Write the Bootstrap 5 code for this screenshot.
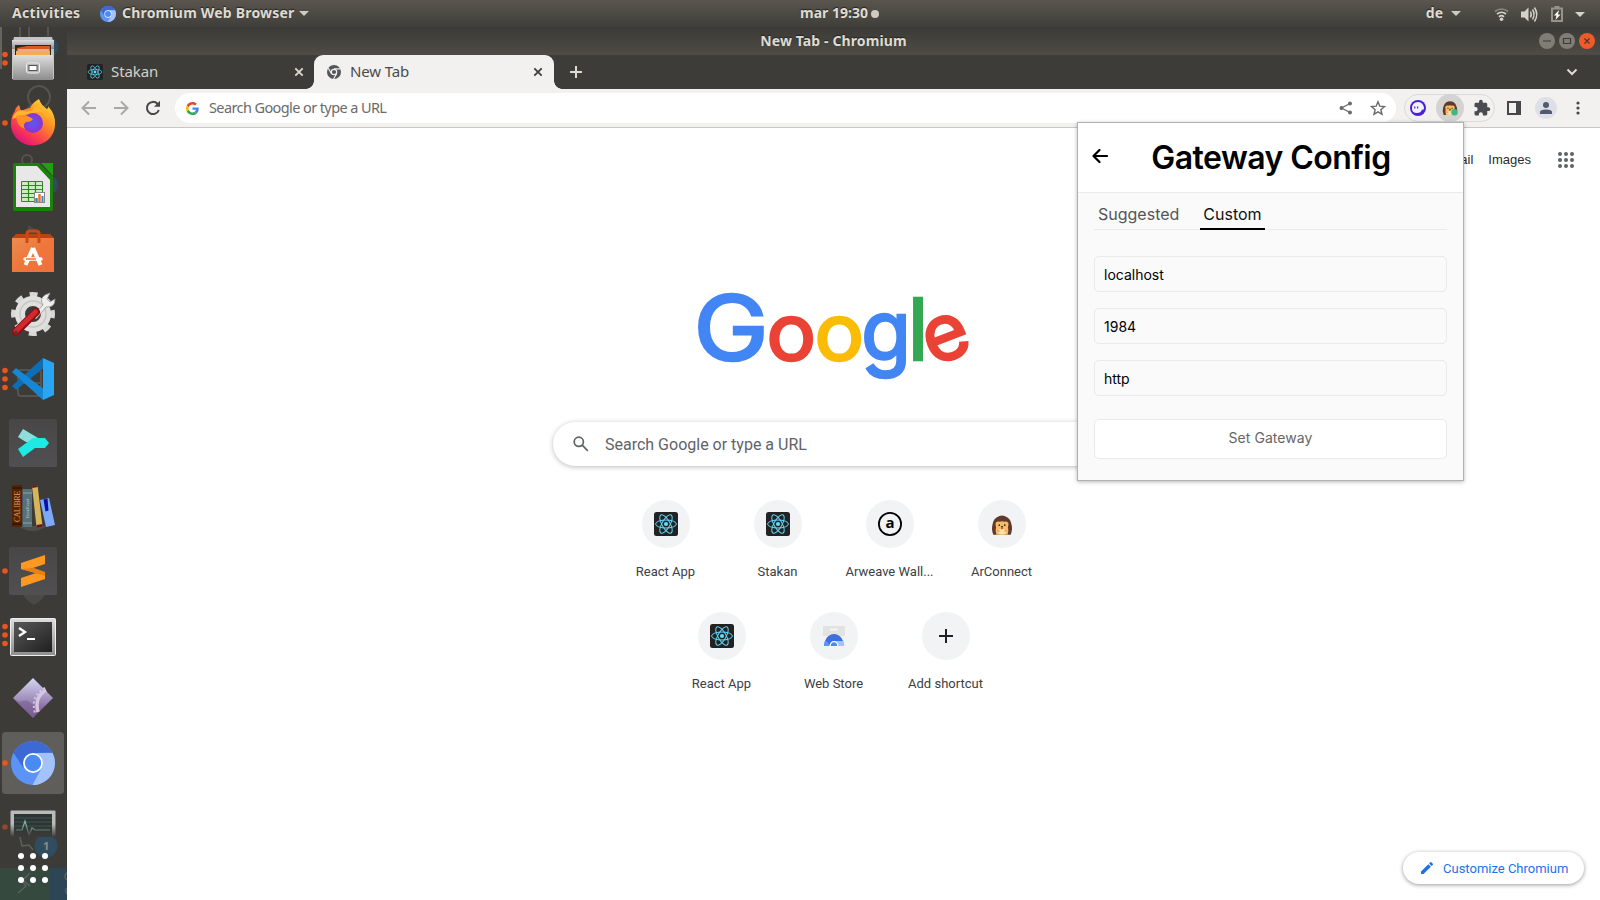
<!DOCTYPE html>
<html lang="en">
<head>
<meta charset="utf-8">
<meta name="viewport" content="width=device-width, initial-scale=1">
<title>New Tab - Chromium</title>
<link href="https://cdn.jsdelivr.net/npm/bootstrap@5.3.0/dist/css/bootstrap.min.css" rel="stylesheet">
<style>
html,body{height:100%;overflow:hidden}
body{font-family:Roboto,"Liberation Sans",sans-serif;background:#fff}
svg{display:block;flex:none}
.desk{width:1600px;height:900px}
.ui{font-family:"Noto Sans","Open Sans",sans-serif}
.topbar{height:27px;background:linear-gradient(#5a564e,#3f3e39);color:#dfdbd2;font-size:14px;font-weight:700;line-height:27px;text-shadow:0 -1px 1px #222}
.topbar>span:not(.caret){padding-bottom:2px;line-height:24px}
.topbar .caret{width:0;height:0;border:5px solid transparent;border-top-color:#cfcbc2;border-bottom:0}
.dock{width:67px;background:#3c3b37;overflow:hidden;flex:none}
.dock-ghost,.dock-foot{position:absolute;left:0;bottom:0}
.titlebar{height:28px;background:linear-gradient(#3b3a36,#4e4c45);color:#dfdbd2;font-size:14px;font-weight:700;line-height:27px;text-shadow:0 -1px 1px #222}
.wtitle{line-height:26px;padding-bottom:1px;letter-spacing:.12px}
.tabstrip{height:34px;background:#3e3c38;font-size:15px;color:#d5d1c8}
.tab-item{height:34px;width:247px;padding:0 9px 0 20px}
.tab-item span{padding-bottom:2px}
.tab-on{background:#f2f1f0;color:#4a4a4a;width:240px;padding:0 10px 0 13px;border-radius:9px 9px 0 0;position:relative}
.tab-on::before,.tab-on::after{content:"";position:absolute;bottom:0;width:8px;height:8px}
.tab-on::before{left:-8px;background:radial-gradient(circle at 0 0,transparent 7.5px,#f2f1f0 8px)}
.tab-on::after{right:-8px;background:radial-gradient(circle at 100% 0,transparent 7.5px,#f2f1f0 8px)}
.toolbar{height:39px;background:#f2f1f0;border-bottom:1px solid #c9c7c5;padding:0 6px}
.slot{width:32px;flex:none;display:flex;align-items:center;justify-content:center}
.omni{height:30px;width:1221px;background:#fff;border-radius:15px;margin-left:6px;padding-left:11px;padding-right:2px;color:#6b6b6b}
.omni-text{font-size:14.5px;letter-spacing:-.6px;padding-bottom:1px}
.ext-pill{width:91px;height:28px;border:1px solid #dcdad8;border-radius:14px;margin-left:8px}
.ext-on{width:28px;height:28px;border-radius:50%;background:#d5d3d1}
.avatar{width:22px;height:22px;border-radius:50%;background:#dde0e6}
.toplinks{font:13px "Liberation Sans",sans-serif;color:#2c2c2c;padding:22px 24px 0 0;height:134px}
.wordmark{overflow:visible}
.ntp-search{width:561px;height:44px;border-radius:22px;box-shadow:0 1px 5px rgba(32,33,36,.3);font-size:16px;color:#5f6368;padding-left:20px;margin-top:36px}
.tiles{width:448px;margin-top:24px}
.tile{width:112px;height:112px;padding-top:10px;font-size:13px;color:#3c4043;line-height:18px}
.tile-icon{width:48px;height:48px;border-radius:50%;background:#f1f3f4;margin-bottom:15px}
.customize{position:absolute;right:16px;bottom:16px;width:181px;height:32px;border-radius:16px;background:#fff;box-shadow:0 1px 4px rgba(0,0,0,.4);color:#1a73e8;font-size:13px;padding-left:18px}
.popup{position:absolute;left:1077px;top:122px;width:387px;height:359px;background:#fafafa;border:1px solid #aeb2b0;box-shadow:0 1px 4px rgba(0,0,0,.28);font-family:Inter,sans-serif;color:#111}
.popup-head{height:70px;background:#fff;border-bottom:1px solid #eaeaea;padding-left:13px}
.popup-title{font-size:32px;font-weight:600;letter-spacing:-.55px;color:#000;line-height:68px;width:353px;padding-right:27px}
.popup-tabs{margin:0 16px;height:37px;border-bottom:1px solid #eaeaea;font-size:16px}
.popup-tabs .ptab{height:37px;line-height:43px;padding:0 3px 0 4px;color:#555}
.popup-tabs .ptab-on{color:#111;border-bottom:2px solid #000;margin-left:18px;padding-left:3px}
.field{height:36px;border:1px solid #eaeaea;border-radius:5px;background:#fafafa;font-size:14px;color:#000;padding:0 9px;line-height:34px;box-shadow:none;margin-bottom:16px}
.set-btn{height:40px;border:1px solid #eaeaea;border-radius:5px;background:#fff;color:#666;font-size:14px;margin-top:7px;letter-spacing:.07px}
</style>
</head>
<body>
<svg width="0" height="0" class="position-absolute">
 <defs>
  <symbol id="react" viewBox="0 0 24 24">
   <rect width="24" height="24" rx="2.500" fill="#222"/>
   <g fill="none" stroke="#61dafb" stroke-width="1"><ellipse cx="12" cy="12" rx="10.400" ry="4"/><ellipse cx="12" cy="12" rx="10.400" ry="4" transform="rotate(60 12 12)"/><ellipse cx="12" cy="12" rx="10.400" ry="4" transform="rotate(120 12 12)"/></g><circle cx="12" cy="12" r="2.100" fill="#61dafb"/>
  </symbol>
  <symbol id="chromium" viewBox="0 0 44 44">
   <circle cx="22" cy="22" r="22" fill="#5b94f6"/>
   <path d="M2.500 11.800A22 22 0 0 1 41.200 11.500L22 12L12.500 27Z" fill="#3c69d3"/>
   <path d="M41.500 12A22 22 0 0 1 21.500 44L31.500 25.500Q33 17 25 12Z" fill="#a3c2fa"/>
   <circle cx="22" cy="22" r="10" fill="#fff"/><circle cx="22" cy="22" r="8.200" fill="#4a8af4"/>
  </symbol>
  <symbol id="hedgehog" viewBox="0 0 24 24">
   <path d="M2.500 22.500Q0 16 1.800 11Q2.500 6 6.500 3.500Q12 0 17.500 3.500Q21.500 6 22.200 11Q24 16 21.500 22.500Z" fill="#613a2b"/>
   <path d="M6 22.500Q4.500 18 5.500 14Q4 9.500 6.500 8.500Q8.500 8 9.500 8.500Q12 7.500 14.500 8.500Q15.500 8 17.500 8.500Q20 9.500 18.500 14Q19.500 18 18 22.500Z" fill="#f5bd66"/>
   <ellipse cx="12" cy="19.300" rx="4.300" ry="3.200" fill="#fbe0a8"/><circle cx="9" cy="12.200" r=".9" fill="#2c1a16"/><circle cx="15" cy="12.200" r=".9" fill="#2c1a16"/><ellipse cx="12" cy="14" rx="1.200" ry=".9" fill="#2c1a16"/><path d="M11 16h2" stroke="#a7392d"/><path d="M7 18l2.500 1M17 18l-2.500 1" stroke="#d18b3e"/>
  </symbol>
  <linearGradient id="gMetal" x1="0" y1="0" x2="0" y2="1"><stop offset="0" stop-color="#dedede"/><stop offset="1" stop-color="#8d8d8d"/></linearGradient>
  <linearGradient id="gFox" x1="1" y1="0" x2="0.300" y2="1"><stop offset="0" stop-color="#fff14a"/><stop offset=".4" stop-color="#ff9a22"/><stop offset=".75" stop-color="#fb3f4d"/><stop offset="1" stop-color="#e0127c"/></linearGradient>
  <radialGradient id="gGlobe"><stop offset="0" stop-color="#5a5bea"/><stop offset="1" stop-color="#8c32d6"/></radialGradient>
  <linearGradient id="gBag" x1="0" y1="0" x2="1" y2="1"><stop offset="0" stop-color="#ec8d4e"/><stop offset=".5" stop-color="#ef763b"/><stop offset="1" stop-color="#f0703b"/></linearGradient>
  <linearGradient id="gSlate" x1="0" y1="0" x2="0" y2="1"><stop offset="0" stop-color="#474747"/><stop offset="1" stop-color="#505053"/></linearGradient>
  <linearGradient id="gDia" x1="0" y1="0" x2="0" y2="1"><stop offset="0" stop-color="#d2d8f2"/><stop offset=".6" stop-color="#9a84b4"/><stop offset="1" stop-color="#6d4277"/></linearGradient>
  <linearGradient id="gScr" x1="0" y1="0" x2="1" y2="1"><stop offset="0" stop-color="#595959"/><stop offset="1" stop-color="#1f1f1f"/></linearGradient>
  <linearGradient id="gFade" x1="0" y1="0" x2="0" y2="1"><stop offset="0" stop-color="#3c3b37" stop-opacity="0"/><stop offset=".4" stop-color="#3c3b37" stop-opacity="0"/><stop offset="1" stop-color="#3c3b37"/></linearGradient>
 </defs>
</svg>

<div class="desk d-flex flex-column position-relative">
 <!-- GNOME top bar -->
 <div class="topbar ui d-flex align-items-center">
  <span style="margin-left:12px;width:88px;letter-spacing:.35px">Activities</span>
  <svg width="16" height="16"><use href="#chromium"/></svg>
  <span style="margin-left:6px;width:177px;letter-spacing:.2px">Chromium Web Browser</span>
  <span class="caret"></span>
  <span style="margin-left:491px">mar 19:30</span>
  <svg width="8" height="8" style="margin-left:3px"><circle cx="4" cy="4" r="4" fill="#cfcbc2"/></svg>
  <span class="ms-auto me-2">de</span><span class="caret" style="margin-right:33px"></span>
  <svg width="96" height="26" viewBox="0 0 96 26" style="margin-right:10px" fill="none" stroke="#d6d2ca" stroke-width="1.700">
   <g><path d="M1 10.500Q7.500 5.500 14 10.500" stroke="#8b8880" /><path d="M3 13Q7.500 9.500 12 13M5 15.800Q7.500 13.500 10 15.800"/><circle cx="7.500" cy="18.300" r="1.800" fill="#d6d2ca" stroke="none"/></g>
   <path d="M27 10.500h3.500l4-4v14l-4-4H27Z" fill="#d6d2ca" stroke="none"/><path d="M36.500 10.500Q38 13.500 36.500 16.500M38.500 8.500Q41.500 13.500 38.500 18.500M40.500 6.500Q45 13.500 40.500 20.500" stroke-width="1.500"/>
   <path d="M58 7.500h10v12.500H58Z" stroke="#96938b" stroke-width="2"/><path d="M60.500 6h5" stroke="#96938b" stroke-width="2"/><path d="M64.500 9.500l-4.500 5h2.500l-1 4.500 5-5.500h-2.700l1.200-4Z" fill="#fff" stroke="none"/>
   <path d="M81 11h10l-5 5Z" fill="#d6d2ca" stroke="none"/>
  </svg>
 </div>

 <div class="d-flex flex-grow-1" style="min-height:0">
  <!-- Dock -->
  <div class="dock position-relative">
   <svg class="dock-ghost" width="67" height="873" viewBox="0 27 67 873" fill="none" stroke="#55544f" stroke-width="2"><path d="M0 27h2v42H0Z" fill="#65645f" stroke="none"/><path d="M20 27v12M29 27v12M48 27v12"/><circle cx="47" cy="47" r="11" fill="#2f4d5f" stroke="none"/><circle cx="39" cy="97" r="11"/><path d="M31 105l-8 9"/><circle cx="27" cy="160" r="5"/><circle cx="48" cy="185" r="10" fill="#2f4d5f" stroke="none"/><path d="M28 225v16l14-8Z" fill="#4a4945" stroke="none"/><rect x="18" y="370" width="23" height="26" rx="3"/><path d="M18 383h23"/><path d="M18 526q15 10 29 0Z" fill="#4e4d49" stroke="none"/><path d="M21 590h26q-2 9-13 15q-11-6-13-15Z" fill="#4a4945" stroke="none"/></svg>
   <div class="position-relative d-flex flex-column">
    <!-- Files -->
    <svg width="67" height="64"><g fill="#e95420"><circle cx="5" cy="27.500" r="2.800"/><circle cx="5" cy="36" r="2.800"/></g><path d="M14 10h38l2 8v34H12V18Z" fill="#c4c4c4"/><path d="M12 13h42v9H12Z" fill="url(#gMetal)"/><path d="M15 18h36v10H15Z" fill="#33251e"/><path d="M17 21l10-2h23v9H16Z" fill="#d65a20"/><path d="M16 24h34v4H16Z" fill="#f7ab59"/><path d="M18 23h31" stroke="#fff"/><path d="M13 28h40v25H13Z" fill="url(#gMetal)"/><rect x="26.500" y="36" width="13" height="10" rx="2" fill="#b5b5b5" stroke="#eee"/><rect x="29" y="38.500" width="8" height="5" fill="#fff" stroke="#555"/></svg>
    <!-- Firefox -->
    <svg width="67" height="64"><circle cx="5" cy="32" r="2.800" fill="#e95420"/><path d="M11 33Q11 24 15 20Q15 17 19 14L21 20Q25 18 30 17Q33 11 39 8Q41 14 47 18Q49 17 48 15Q56 24 55 34A22 21 0 0 1 11 33Z" fill="url(#gFox)"/><path d="M12 28Q16 17 25 20Q31 22 35 16Q46 18 48 31Q46 19 37 21L24 24Z" fill="#ffb52e"/><circle cx="33" cy="32" r="10" fill="url(#gGlobe)"/><path d="M16 25Q24 22 33 28Q31 31 26 31Q22 34 25 38Q17 36 16 25Z" fill="#ff9127"/></svg>
    <!-- Calc -->
    <svg width="67" height="64"><path d="M15 8h24l14 14v32q0 2-2 2H15q-2 0-2-2V10q0-2 2-2Z" fill="#18820a"/><path d="M41 8h12v13Z" fill="#1fa00c"/><path d="M16 11h21l13 14v27H16Z" fill="#e8e8e8"/><path d="M21.500 26.500h21v20h-21Z" fill="#c9f0bf" stroke="#2a8a1b"/><path d="M21.500 30.500h21M21.500 34.500h21M21.500 38.500h21M21.500 42.500h21M28.500 26.500v20M35.500 26.500v20" stroke="#2a8a1b" stroke-width="1.200"/><rect x="34.500" y="37.500" width="10" height="10" fill="#fff" stroke="#888"/><path d="M36.500 47v-4" stroke="#2f8ad0" stroke-width="2.500"/><path d="M39.500 47v-8" stroke="#e87722" stroke-width="2.500"/><path d="M42.500 47v-6" stroke="#2f8ad0" stroke-width="2"/></svg>
    <!-- Software -->
    <svg width="67" height="64"><path d="M12 19l4-4h34l4 4Z" fill="#ba4316"/><path d="M12 19h42v34H12Z" fill="url(#gBag)"/><path d="M27 24v-9q0-3 3-3h6q3 0 3 3v9" fill="none" stroke="#c64b1c" stroke-width="3"/><path d="M33 29L25.500 46M33 29L40.500 46" stroke="#fff" stroke-width="4"/><path d="M25 40h16" stroke="#fff" stroke-width="3.500" stroke-linecap="round"/><path d="M26 40h10" stroke="#ef763b" stroke-width="1.500"/></svg>
    <!-- Settings -->
    <svg width="67" height="64"><circle cx="33" cy="31" r="19.500" fill="none" stroke="#d8d8d6" stroke-width="5" stroke-dasharray="7.650 7.650" transform="rotate(-11 33 31)"/><circle cx="33" cy="31" r="13" fill="none" stroke="#dfdfdd" stroke-width="10"/><circle cx="33" cy="31" r="13" fill="none" stroke="#c6c6c4" stroke-width="1.500"/><path d="M33 33l10-11q-4-6 2-10l5-2-3 6 3 3 5-3q0 9-9 8L36 36Z" fill="#eee" stroke="#999" stroke-width=".8"/><path d="M36 29L16 49" stroke="#8d1016" stroke-width="8" stroke-linecap="round"/><path d="M35.500 29L16 48" stroke="#d2292f" stroke-width="5" stroke-linecap="round"/><circle cx="16" cy="49" r="1.500" fill="#3c3b37"/></svg>
    <!-- VS Code -->
    <svg width="67" height="64"><g fill="#e95420"><circle cx="5" cy="23.500" r="2.800"/><circle cx="5" cy="32" r="2.800"/><circle cx="5" cy="40.500" r="2.800"/></g><path d="M43 11L12 39l4 4 29-23Z" fill="#0f6db5"/><path d="M12 25l4-4 29 22-2 10Z" fill="#1587d4"/><path d="M43 11l11 5v32l-11 5Z" fill="#2aa5f3"/></svg>
    <!-- Tabby -->
    <svg width="67" height="64"><rect x="9" y="8" width="48" height="48" rx="2" fill="url(#gSlate)"/><path d="M23 18l-5 8 8 5h10l2-4Z" fill="#8ddfdc"/><path d="M18 38l15-11h12l4 5-4 5H35L23 46Z" fill="#1ee9e5"/></svg>
    <!-- Calibre -->
    <svg width="67" height="64"><rect x="12" y="10" width="10" height="42" fill="#562205"/><path d="M12 13h10M12 49h10" stroke="#1d0c02"/><text transform="translate(20 47) rotate(-90)" font-family="Liberation Serif,serif" font-size="7.500" textLength="31" fill="#dfa94a">CALIBRE</text><rect x="22.500" y="14" width="9.500" height="38" fill="#587078"/><path d="M23 18h9M23 48h9" stroke="#8ba5ac"/><text transform="translate(29 43) rotate(-90)" font-family="Liberation Serif,serif" font-size="5" textLength="19" fill="#b5c6cb">Kovid Goyal</text><path d="M32 11l5.500-1 5 41-6 1Z" fill="#d7b65b"/><path d="M32 10.500l5.500-.5.400 2-5.600 1ZM36.500 50l6-1v2.500l-6 1Z" fill="#6a1422"/><path d="M40 25l9-2 6 27-9 2Z" fill="#7da9fb"/><path d="M43.500 24.500l4-1 1 12-3 1Z" fill="#0712a8"/></svg>
    <!-- Sublime Text -->
    <svg width="67" height="64"><circle cx="5" cy="32" r="2.800" fill="#e95420"/><rect x="9" y="8" width="48" height="48" rx="2" fill="url(#gSlate)"/><path d="M21 24l24-8v9L30 30l15 5v5L21 48v-9l15-5-15-4Z" fill="#ff9820"/><path d="M21 30l24 7v-4l-11-4Z" fill="#e9810e"/></svg>
    <!-- Terminal -->
    <svg width="67" height="64"><g fill="#e95420"><circle cx="5" cy="23.500" r="2.800"/><circle cx="5" cy="32" r="2.800"/><circle cx="5" cy="40.500" r="2.800"/></g><rect x="10.500" y="15.500" width="45" height="37" rx="1" fill="url(#gMetal)" stroke="#eee"/><rect x="14" y="19" width="38" height="30" fill="url(#gScr)"/><path d="M19 25l6 4-6 4" fill="none" stroke="#fff" stroke-width="2.300"/><path d="M27 36h8" stroke="#fff" stroke-width="2"/></svg>
    <!-- Diamond -->
    <svg width="67" height="64"><path d="M33 11l20 20-20 20-20-20Z" fill="url(#gDia)"/><path d="M14 32q5 4 9 2t9 3 3 12l-2 2Z" fill="#7d6698" opacity=".7"/><path d="M46 23Q34 30 38 45" fill="none" stroke="#d5c6e2" stroke-width="3.500"/><path d="M45 21Q30 29 35 46" fill="none" stroke="#d5c6e2" stroke-width="2" stroke-dasharray="2 2.500"/></svg>
    <!-- Chromium -->
    <svg width="67" height="64"><rect x="2" y="1" width="62" height="62" rx="3.500" fill="#5f5e5b"/><circle cx="5" cy="32" r="2.800" fill="#e95420"/><use href="#chromium" x="11" y="10" width="44" height="44"/></svg>
    <!-- System monitor -->
    <svg width="67" height="64"><circle cx="5" cy="32" r="2.800" fill="#8e4930"/><path d="M10.500 42V16.500q0-1 1-1h43q1 0 1 1V42" fill="#bababa"/><path d="M14 19h38v23H14Z" fill="#2b3634"/><path d="M14 23h38M14 27h38M14 31h38" stroke="#455250"/><path d="M16 35h6l3-9 4 14 3-7 3 2h15" fill="none" stroke="#7fb8a7" stroke-width="1.200"/><path d="M8 20h50v22H8Z" fill="url(#gFade)"/></svg>
   </div>
   <svg class="dock-foot" width="67" height="63" viewBox="0 837 67 63"><path d="M0 837h67v63H0Z" fill="#3c3b37"/><path d="M0 868h49v32H0Z" fill="#36493e"/><path d="M49 868h18v32H49Z" fill="#2d4555"/><path d="M20 837l2 9 7-1 4 5M18 893l8-7-6-7M30 873l-7 7 7 6M67 873a4 4 0 0 0 0 7M67 888a4 4 0 0 0 0 6" fill="none" stroke="#5b615a" stroke-width="1.500"/><circle cx="46" cy="846" r="11.500" fill="#2f4d5f"/><text x="43" y="850" font-family="Noto Sans,sans-serif" font-weight="700" font-size="11" fill="#8c8c88">1</text><g fill="#fff"><circle cx="21" cy="856" r="3"/><circle cx="33" cy="856" r="3"/><circle cx="45" cy="856" r="3"/><circle cx="21" cy="868" r="3"/><circle cx="33" cy="868" r="3"/><circle cx="45" cy="868" r="3"/><circle cx="21" cy="880" r="3"/><circle cx="33" cy="880" r="3"/><circle cx="45" cy="880" r="3"/></g></svg>
  </div>

  <!-- Browser window -->
  <div class="d-flex flex-column flex-grow-1 bg-white">
   <div class="titlebar ui d-flex align-items-center">
    <div style="width:61px"></div>
    <div class="flex-grow-1 text-center wtitle">New Tab - Chromium</div>
    <svg width="61" height="28" viewBox="0 0 61 28"><circle cx="8" cy="14" r="8" fill="#7f7d76"/><circle cx="28" cy="14" r="8" fill="#7f7d76"/><circle cx="48" cy="14" r="8" fill="#ef5a29"/><path d="M4 14h8M24.500 11.500h7v5h-7ZM45.500 11.500l5 5M50.500 11.500l-5 5" fill="none" stroke="#3c3b37" stroke-width="1.200"/></svg>
   </div>
   <div class="tabstrip ui d-flex align-items-center">
    <div class="tab-item d-flex align-items-center">
     <svg width="16" height="16"><use href="#react"/></svg><span style="margin-left:8px;letter-spacing:-.1px">Stakan</span>
     <svg class="ms-auto" width="12" height="12" viewBox="0 0 12 12" stroke="#dfdbd2" stroke-width="1.800"><path d="M2.300 2.300l7.400 7.400M9.700 2.300L2.300 9.700"/></svg>
    </div>
    <div class="tab-item tab-on d-flex align-items-center">
     <svg width="14" height="14" viewBox="0 0 14 14"><circle cx="7" cy="7" r="7" fill="#54565a"/><circle cx="7" cy="7" r="2.700" fill="none" stroke="#f2f1f0" stroke-width="1.200"/><path d="M7 3.900h6.500M4.300 8.500L1.200 3M9.700 8.600L6.500 14" stroke="#f2f1f0" stroke-width="1.100"/></svg><span style="margin-left:9px;letter-spacing:-.15px">New Tab</span>
     <svg class="ms-auto" width="12" height="12" viewBox="0 0 12 12" stroke="#3f3f3f" stroke-width="1.800"><path d="M2.300 2.300l7.400 7.400M9.700 2.300L2.300 9.700"/></svg>
    </div>
    <svg width="12" height="12" style="margin-left:16px" stroke="#dfdbd2" stroke-width="2"><path d="M6 0v12M0 6h12"/></svg>
    <svg class="ms-auto" width="12" height="8" style="margin-right:22px" fill="none" stroke="#dfdbd2" stroke-width="2"><path d="M1.500 1.500L6 6l4.500-4.500"/></svg>
   </div>
   <div class="toolbar ui d-flex align-items-center">
    <div class="slot"><svg width="16" height="16" fill="none" stroke="#a9a8a6" stroke-width="2"><path d="M15 8H2M8 1.500L1.500 8 8 14.500"/></svg></div>
    <div class="slot"><svg width="16" height="16" fill="none" stroke="#a9a8a6" stroke-width="2"><path d="M1 8h13M8 1.500L14.500 8 8 14.500"/></svg></div>
    <div class="slot"><svg width="16" height="16" fill="none" stroke="#45474a" stroke-width="2"><path d="M13.800 10A6.100 6.100 0 1 1 12.500 3.800L14 5.500"/><path d="M15 .8v6H9Z" fill="#45474a" stroke="none"/></svg></div>
    <div class="omni d-flex align-items-center">
     <svg width="13" height="13" viewBox="0 0 48 48"><path fill="#ea4335" d="M24 9.500c3.540 0 6.710 1.220 9.210 3.600l6.850-6.850C35.900 2.380 30.470 0 24 0 14.620 0 6.510 5.380 2.560 13.220l7.980 6.190C12.430 13.720 17.740 9.500 24 9.500z"/><path fill="#4285f4" d="M46.980 24.550c0-1.570-.15-3.090-.38-4.550H24v9.020h12.940c-.58 2.960-2.260 5.480-4.780 7.180l7.730 6c4.510-4.180 7.090-10.360 7.090-17.650z"/><path fill="#fbbc05" d="M10.530 28.590c-.48-1.450-.76-2.990-.76-4.590s.27-3.140.76-4.590l-7.980-6.190C.92 16.460 0 20.120 0 24c0 3.880.92 7.540 2.560 10.780l7.970-6.190z"/><path fill="#34a853" d="M24 48c6.480 0 11.930-2.130 15.890-5.810l-7.730-6c-2.150 1.450-4.920 2.300-8.160 2.300-6.260 0-11.570-4.220-13.470-9.910l-7.980 6.190C6.510 42.620 14.620 48 24 48z"/></svg>
     <span class="omni-text" style="margin-left:10px">Search Google or type a URL</span>
     <div class="slot ms-auto"><svg width="14" height="14" fill="#68696b" stroke="#68696b" stroke-width="1.300"><path d="M11 2.500L2.500 7l8.500 4.500" fill="none"/><circle cx="11" cy="2.500" r="1.300"/><circle cx="2.500" cy="7" r="1.300"/><circle cx="11" cy="11.500" r="1.300"/></svg></div>
     <div class="slot"><svg width="16" height="16" fill="none" stroke="#68696b" stroke-width="1.400"><path d="M8 1.800l1.800 4.400 4.700.4-3.600 3.100 1.100 4.600L8 11.800l-4 2.500 1.100-4.600L1.500 6.600l4.700-.4Z"/></svg></div>
    </div>
    <div class="ext-pill d-flex align-items-center justify-content-center">
     <div class="slot"><svg width="16" height="16"><circle cx="8" cy="8" r="8" fill="#4a22d4"/><path d="M2 8.500Q2 2 8 2q3.500 0 5 3 1 1 1 3.500-.5 2-2 1-1 3.500-5 3.500-5 0-5-4.500Z" fill="#f3f0ff"/><path d="M4.800 6.500v2M7.600 6.500v2" stroke="#4a22d4" stroke-width="1.200"/></svg></div>
     <div class="slot"><div class="ext-on d-flex align-items-center justify-content-center"><svg width="16" height="16"><use href="#hedgehog"/><circle cx="12.500" cy="12.300" r="3.200" fill="#3db984"/></svg></div></div>
     <div class="slot"><svg width="18" height="18" viewBox="0 0 24 24" fill="#4b4c4f"><path d="M20.500 11H19V7c0-1.100-.9-2-2-2h-4V3.500a2.500 2.500 0 0 0-5 0V5H4c-1.100 0-2 .9-2 2v3.800h1.500a2.700 2.700 0 0 1 0 5.400H2V20c0 1.100.9 2 2 2h3.800v-1.500a2.700 2.700 0 0 1 5.400 0V22H17c1.100 0 2-.9 2-2v-4h1.500a2.500 2.500 0 0 0 0-5z"/></svg></div>
    </div>
    <div class="slot" style="margin-left:3px"><svg width="14" height="14"><path d="M1 1h12v12H1Z" fill="none" stroke="#45474a" stroke-width="2"/><path d="M9 1h4v12H9Z" fill="#45474a"/></svg></div>
    <div class="slot"><div class="avatar d-flex align-items-center justify-content-center"><svg width="14" height="14" fill="#515a70"><circle cx="7" cy="4" r="3"/><path d="M1 13v-2q0-2.500 6-2.500T13 11v2Z"/></svg></div></div>
    <div class="slot"><svg width="4" height="14" fill="#45474a"><circle cx="2" cy="2" r="1.600"/><circle cx="2" cy="7" r="1.600"/><circle cx="2" cy="12" r="1.600"/></svg></div>
   </div>

   <!-- New tab page -->
   <div class="flex-grow-1 d-flex flex-column align-items-center">
    <div class="toplinks align-self-stretch d-flex justify-content-end align-items-start">
     <span style="line-height:20px">Gmail</span><span style="margin-left:15px;line-height:20px">Images</span>
     <svg width="20" height="20" style="margin-left:25px" fill="#5f6368"><g id="gr"><circle cx="4" cy="4" r="2"/><circle cx="10" cy="4" r="2"/><circle cx="16" cy="4" r="2"/></g><use href="#gr" y="6"/><use href="#gr" y="12"/></svg>
    </div>
    <svg class="wordmark" width="272" height="124" viewBox="698 262 272 124" font-family="Inter,sans-serif" font-size="78" text-anchor="middle" role="img" aria-label="Google" stroke-width="2.500">
     <text font-size="90" transform="translate(731 359.500) scale(1.120 1)" fill="#4285f4" stroke="#4285f4">G</text>
     <text transform="translate(791.300 359.500) scale(1.060 1)" fill="#ea4335" stroke="#ea4335">o</text>
     <text transform="translate(839.300 359.500) scale(1.060 1)" fill="#fbbc05" stroke="#fbbc05">o</text>
     <text transform="translate(886 360) scale(1.040 1.060)" fill="#4285f4" stroke="#4285f4">g</text>
     <text font-size="85" transform="translate(918 359.500)" fill="#34a853" stroke="#34a853">l</text>
     <text transform="translate(946.500 339) rotate(-21) translate(0 20.500)" fill="#ea4335" stroke="#ea4335">e</text>
    </svg>
    <div class="ntp-search d-flex align-items-center"><svg width="16" height="16" fill="none" stroke="#5f6368" stroke-width="1.700"><circle cx="5.800" cy="5.800" r="4.600"/><path d="M9.200 9.200L14.800 14.800"/></svg><span style="margin-left:16px;padding-top:2px">Search Google or type a URL</span></div>
    <div class="tiles d-flex flex-wrap justify-content-center">
     <div class="tile d-flex flex-column align-items-center"><div class="tile-icon d-flex align-items-center justify-content-center"><svg width="24" height="24"><use href="#react"/></svg></div>React App</div>
     <div class="tile d-flex flex-column align-items-center"><div class="tile-icon d-flex align-items-center justify-content-center"><svg width="24" height="24"><use href="#react"/></svg></div>Stakan</div>
     <div class="tile d-flex flex-column align-items-center"><div class="tile-icon d-flex align-items-center justify-content-center"><svg width="24" height="24"><circle cx="12" cy="12" r="11.100" fill="none" stroke="#000" stroke-width="1.800"/><text x="12" y="16" text-anchor="middle" font-family="Open Sans,sans-serif" font-weight="700" font-size="15">a</text></svg></div>Arweave Wall...</div>
     <div class="tile d-flex flex-column align-items-center"><div class="tile-icon d-flex align-items-center justify-content-center"><svg width="24" height="24"><use href="#hedgehog" y="2" x="1" width="22" height="22"/></svg></div>ArConnect</div>
     <div class="tile d-flex flex-column align-items-center"><div class="tile-icon d-flex align-items-center justify-content-center"><svg width="24" height="24"><use href="#react"/></svg></div>React App</div>
     <div class="tile d-flex flex-column align-items-center"><div class="tile-icon d-flex align-items-center justify-content-center"><svg width="24" height="24"><path d="M1 2h22v10H1Z" fill="#e2e2e3"/><path d="M2 12h20v10H2Z" fill="#f0f1f3"/><rect x="8" y="4.500" width="8" height="2" rx="1" fill="#f5f5f5"/><path d="M2 22A10 12 0 0 1 22 22Z" fill="#3f6fd8"/><path d="M2 22q0-3 1.500-6L9 22Z" fill="#5b94f6"/><path d="M13 17h8q1.500 3 1 5h-6Z" fill="#a3c2fa"/><path d="M7.500 22a4.500 5 0 0 1 9 0Z" fill="#fff"/><path d="M8.800 22a3.200 3.800 0 0 1 6.400 0Z" fill="#4a8af4"/></svg></div>Web Store</div>
     <div class="tile d-flex flex-column align-items-center"><div class="tile-icon d-flex align-items-center justify-content-center"><svg width="14" height="14" stroke="#202124" stroke-width="2"><path d="M7 0v14M0 7h14"/></svg></div>Add shortcut</div>
    </div>
   </div>
  </div>
 </div>

 <div class="customize d-flex align-items-center"><svg width="12" height="12" viewBox="3 3 18 18" fill="#1a73e8"><path d="M3 17.250V21h3.750L17.810 9.940l-3.750-3.750L3 17.250zM20.710 7.040a1 1 0 0 0 0-1.410l-2.340-2.340a1 1 0 0 0-1.410 0l-1.830 1.830 3.750 3.750 1.830-1.830z"/></svg><span style="margin-left:10px;padding-top:1px">Customize Chromium</span></div>

 <!-- Extension popup -->
 <div class="popup">
  <div class="popup-head d-flex align-items-center">
   <svg width="17" height="16" style="margin-top:-3px" fill="none" stroke="#000" stroke-width="2.200" stroke-linecap="round" stroke-linejoin="round"><path d="M16 8H3M8.500 2L2.500 8l6 6"/></svg>
   <div class="popup-title text-center">Gateway Config</div>
  </div>
  <div class="popup-tabs d-flex"><div class="ptab">Suggested</div><div class="ptab ptab-on">Custom</div></div>
  <div style="padding:26px 16px 0">
   <input class="form-control field" value="localhost"><input class="form-control field" value="1984"><input class="form-control field" value="http">
   <button class="btn set-btn w-100 px-0 pt-0 pb-1">Set Gateway</button>
  </div>
 </div>
</div>
<script src="https://cdn.jsdelivr.net/npm/bootstrap@5.3.0/dist/js/bootstrap.bundle.min.js"></script>
</body>
</html>
